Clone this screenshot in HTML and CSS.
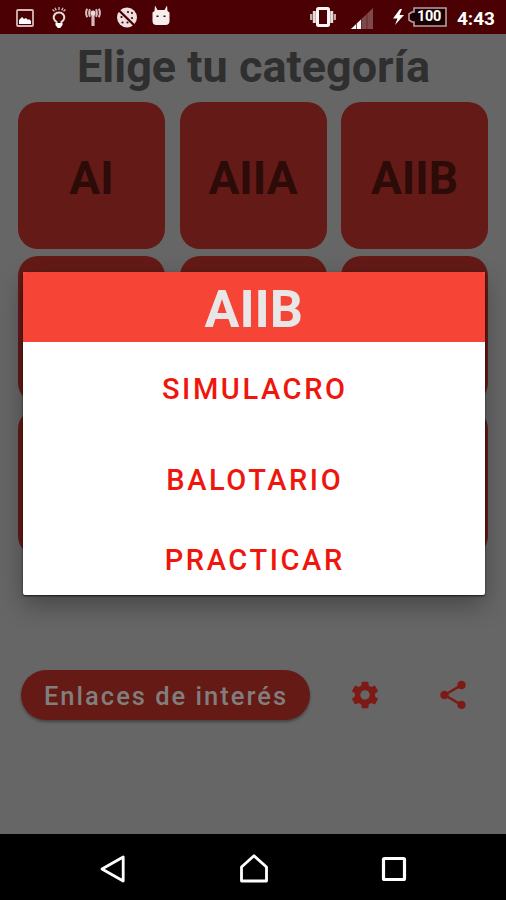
FILE: index.html
```html
<!DOCTYPE html>
<html lang="es">
<head>
<meta charset="utf-8">
<title>Elige tu categoría</title>
<link rel="stylesheet" href="styles.css">
</head>
<body>
<div class="phone">
  <header class="status">
    <div class="status-left">
      <svg class="i-picture" width="18" height="18" viewBox="0 0 18 18"><rect x="1" y="1" width="16" height="16" rx="1" fill="none" stroke="#d5b9b9" stroke-width="1.8"/><path d="M3 15v-4l3-3 2 2 2-1 2 2 1-1 2 2v3z" fill="#fff"/></svg>
      <svg class="i-bulb" width="16" height="22" viewBox="0 0 16 22"><path d="M5.500 17v-2.200A5.300 5 0 1 1 10.500 14.800V17z" fill="none" stroke="#eadada" stroke-width="2"/><path d="M4.800 16h6.400v2.500l-2 2.500H6.800l-2-2.500z" fill="#fff"/><path d="M8 0v3M4 .8l1.300 2.600M12 .8l-1.300 2.600M1.500 2.500l2 1.800M14.500 2.500l-2 1.800" stroke="#d8bcbc" stroke-width="1.300"/></svg>
      <svg class="i-tower" width="16" height="18" viewBox="0 0 16 18"><path d="M8 6v12" stroke="#d8bcbc" stroke-width="3.200"/><circle cx="8" cy="5" r="2.600" fill="#eadada"/><path d="M5 1.200Q3.200 5 5 8.800M2.200.8Q0 5 2.200 9.200M11 1.200q1.800 3.800 0 7.600M13.800.8q2.200 4.200 0 8.400" fill="none" stroke="#d8bcbc" stroke-width="2"/></svg>
      <svg class="i-cookie" width="22" height="21" viewBox="0 0 22 21"><circle cx="11" cy="10.500" r="10" fill="#eee0e0"/><g fill="#4b0003"><circle cx="12" cy="5" r="1.100"/><circle cx="16" cy="6" r="1.100"/><circle cx="5.500" cy="10" r="1.100"/><circle cx="6.500" cy="15.500" r="1.100"/><circle cx="11.500" cy="15.500" r="1.100"/><circle cx="16" cy="11" r="1.100"/></g><path d="M1.500 2l18 17.500" stroke="#4b0003" stroke-width="2.400"/></svg>
      <svg class="i-cat" width="18" height="21" viewBox="0 0 18 21"><path d="M.5 7.500L2.500 6 3 .5 5.500 5h7L15 .5l.5 5.500 2 1.500V16q0 4-4 4h-9q-4 0-4-4z" fill="#f8eeee"/><path d="M4.500 11.300h2M11.500 11.300h2" stroke="#4b0003" stroke-width="1.600"/></svg>
    </div>
    <div class="status-right">
      <svg class="i-vibrate" width="28" height="20" viewBox="0 0 28 20"><rect x="8.500" y="1.500" width="11" height="17" rx="1" fill="none" stroke="#fff5f5" stroke-width="3"/><path d="M5.300 4v12M22.700 4v12" stroke="#eadada" stroke-width="3"/><path d="M2.200 7v6M25.800 7v6" stroke="#c9a8a8" stroke-width="2.400"/></svg>
      <svg class="i-signal" width="22" height="21" viewBox="0 0 22 21"><path d="M0 21L22 0v21z" fill="#7f484a"/><path d="M0 21L10 11.500V21z" fill="#fff"/><path d="M5.500 15v6M10.500 10v11M16 5v16" stroke="#5d2527" stroke-width=".8"/></svg>
      <svg class="i-bolt" width="11" height="16" viewBox="0 0 11 16"><path d="M7 0L0 9.500h4.500L2 16 11 6H6.500L9 0z" fill="#fff"/></svg>
      <div class="battery"><svg class="battery-frame" width="39" height="20" viewBox="0 0 39 20"><path d="M6 1h32v18H6v-4H4l-3-2V7l3-2h2z" fill="#190002" stroke="#baa0a0" stroke-width="1.600"/></svg><span class="battery-text">100</span></div>
      <span class="clock">4:43</span>
    </div>
  </header>
  <main class="screen">
    <h1 class="title">Elige tu categoría</h1>
    <div class="tiles">
      <div class="tile">AI</div><div class="tile">AIIA</div><div class="tile">AIIB</div>
      <div class="tile"></div><div class="tile"></div><div class="tile"></div>
      <div class="tile"></div><div class="tile"></div><div class="tile"></div>
    </div>
    <div class="actions">
      <button class="links">Enlaces de interés</button>
      <svg class="i-gear" width="32" height="32" viewBox="0 0 24 24"><path fill="#7d1a15" d="M19.430 12.980c.04-.32.07-.64.07-.98s-.03-.66-.07-.98l2.110-1.650c.19-.15.24-.42.12-.64l-2-3.460c-.12-.22-.39-.3-.61-.22l-2.490 1c-.52-.4-1.080-.73-1.690-.98l-.38-2.650C14.460 2.180 14.250 2 14 2h-4c-.25 0-.46.18-.49.42l-.38 2.650c-.61.25-1.170.59-1.690.98l-2.490-1c-.23-.09-.49 0-.61.22l-2 3.460c-.13.22-.07.49.12.64l2.110 1.650c-.04.32-.07.65-.07.98s.03.66.07.98l-2.110 1.650c-.19.15-.24.42-.12.64l2 3.460c.12.22.39.3.61.22l2.490-1c.52.4 1.080.73 1.690.98l.38 2.650c.03.24.24.42.49.42h4c.25 0 .46-.18.49-.42l.38-2.650c.61-.25 1.170-.59 1.690-.98l2.490 1c.23.09.49 0 .61-.22l2-3.460c.12-.22.07-.49-.12-.64l-2.110-1.650zM12 15.500c-1.930 0-3.500-1.570-3.500-3.500s1.570-3.500 3.500-3.500 3.500 1.570 3.500 3.500-1.570 3.500-3.500 3.500z"/></svg>
      <svg class="i-share" width="34" height="34" viewBox="0 0 24 24"><path fill="#7d1a15" d="M18 16.080c-.76 0-1.440.3-1.960.77L8.910 12.700c.05-.23.09-.46.09-.7s-.04-.47-.09-.7l7.050-4.110c.54.5 1.250.81 2.040.81 1.660 0 3-1.340 3-3s-1.340-3-3-3-3 1.340-3 3c0 .24.04.47.09.7L8.040 9.810C7.500 9.310 6.790 9 6 9c-1.660 0-3 1.340-3 3s1.340 3 3 3c.79 0 1.500-.31 2.040-.81l7.120 4.160c-.05.21-.08.43-.08.65 0 1.610 1.310 2.920 2.920 2.920s2.920-1.310 2.920-2.920-1.310-2.920-2.920-2.920z"/></svg>
    </div>
    <section class="dialog">
      <h2 class="dialog-title">AIIB</h2>
      <div class="dialog-body">
        <button class="option">SIMULACRO</button>
        <button class="option">BALOTARIO</button>
        <button class="option">PRACTICAR</button>
      </div>
    </section>
  </main>
  <nav class="nav">
    <svg width="28" height="30" viewBox="0 0 28 30"><path d="M3 15L24.200 3v24z" fill="none" stroke="#fff" stroke-width="2.800" stroke-linejoin="round"/></svg>
    <svg width="30" height="30" viewBox="0 0 30 30"><path d="M2.500 13L15 1.800 27.500 13v14h-25z" fill="none" stroke="#fff" stroke-width="2.800" stroke-linejoin="round"/></svg>
    <svg width="28" height="30" viewBox="0 0 28 30"><rect x="3.500" y="4.500" width="21" height="21" rx="1" fill="none" stroke="#fff" stroke-width="3.200"/></svg>
  </nav>
</div>
</body>
</html>
```

FILE: styles.css
```css
* { box-sizing: border-box; }
body { margin: 0; font-family: Roboto, "Liberation Sans", sans-serif; }
button { border: 0; padding: 0; background: none; font-family: inherit; }
svg { display: block; flex: none; }
.phone { width: 506px; height: 900px; display: flex; flex-direction: column; overflow: hidden; background: #666; }
.status { height: 34px; flex: none; background: #4b0003; display: flex; justify-content: space-between; padding: 0 11px 0 16px; }
.status-left, .status-right { display: flex; align-items: center; }
.i-picture { margin-top: 1px; }
.i-bulb { margin-left: 17px; margin-top: 1px; }
.i-tower { margin-left: 18px; }
.i-cookie { margin-left: 15px; }
.i-cat { margin-left: 14px; margin-top: -3px; }
.i-signal { margin-left: 14px; margin-top: 3px; }
.i-bolt { margin-left: 20px; }
.battery { position: relative; width: 39px; height: 20px; margin-left: 4px; }
.battery-text { position: absolute; inset: 0 1px 0 4px; text-align: center; line-height: 20px; font-size: 14.500px; font-weight: 700; letter-spacing: -.3px; color: #fff; }
.clock { margin-left: 10px; margin-top: 3px; font-size: 19px; font-weight: 700; line-height: 22px; color: #fff; }
.screen { position: relative; height: 800px; flex: none; }
.title { margin: 0; height: 68px; line-height: 66px; padding-left: 1px; text-align: center; font-size: 45px; font-weight: 700; color: #2f2f2f; white-space: nowrap; }
.tiles { display: grid; grid-template-columns: repeat(3, 147px); grid-auto-rows: 147px; justify-content: space-between; row-gap: 6.500px; padding: 0 18px; }
.tile { display: flex; align-items: center; justify-content: center; border-radius: 20px; background: #641a16; color: #2d0b08; font-size: 46px; font-weight: 700; padding-top: 4px; }
.actions { display: flex; align-items: center; margin-top: 114px; padding-left: 21px; height: 50px; }
.links { width: 289px; height: 50px; border-radius: 25px; background: #651a16; color: #817f7e; font-size: 25.500px; font-weight: 500; letter-spacing: 2px; padding: 1px 0 0 1px; box-shadow: 0 2px 3px rgba(0,0,0,.35); white-space: nowrap; }
.i-gear { margin-left: 39px; }
.i-share { margin-left: 55px; }
.dialog { position: absolute; left: 23px; top: 237.500px; width: 461.500px; height: 323.500px; background: #fff; border-radius: 2px; overflow: hidden; box-shadow: 0 1px 2px rgba(0,0,0,.7), 0 10px 26px rgba(0,0,0,.32); }
.dialog-title { margin: 0; height: 70px; background: #f64436; color: #e8e6e6; line-height: 76px; font-size: 52px; font-weight: 700; text-align: center; }
.dialog-body { display: grid; grid-template-rows: 94px 88px 73px; }
.option { color: #ee160d; font-size: 29px; font-weight: 500; letter-spacing: 2.600px; padding-left: 2px; }
.nav { height: 66px; flex: none; background: #000; display: flex; align-items: center; justify-content: space-between; padding: 4px 98px 0 99px; }
```
